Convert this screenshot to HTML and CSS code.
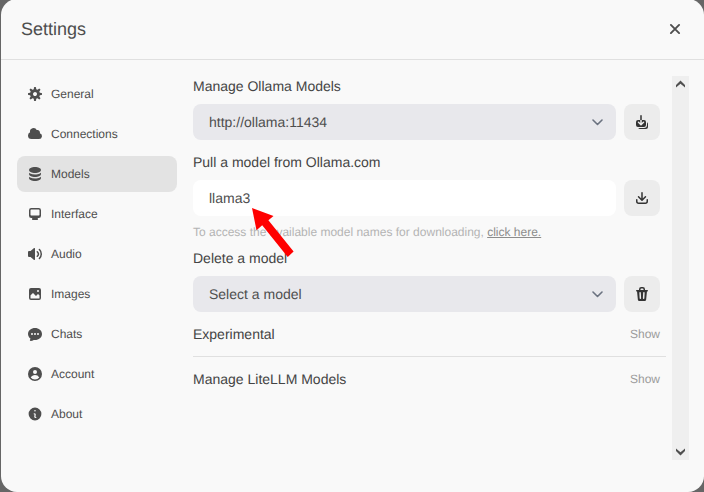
FILE: index.html
```html
<!DOCTYPE html>
<html lang="en">
<head>
<meta charset="utf-8">
<meta name="viewport" content="width=device-width, initial-scale=1">
<title>Settings</title>
<link rel="stylesheet" href="styles.css">
</head>
<body>
<div class="modal" role="dialog" aria-labelledby="title">
  <header class="header">
    <h1 class="title" id="title">Settings</h1>
    <button class="close" type="button" aria-label="Close">
      <svg viewBox="0 0 20 20" width="20" height="20" fill="none" stroke="currentColor" stroke-width="1.9" stroke-linecap="round"><path d="M5.900 5.900 14.100 14.100M14.100 5.900 5.900 14.100"/></svg>
    </button>
  </header>
  <div class="content">
    <nav class="tabs">
      <button class="tab" type="button">
        <svg class="icon" viewBox="0 0 16 16"><path fill-rule="evenodd" d="M6.955 1.45A.5.5 0 0 1 7.452 1h1.096a.5.5 0 0 1 .497.45l.17 1.699c.484.12.94.312 1.356.562l1.321-1.081a.5.5 0 0 1 .67.033l.774.775a.5.5 0 0 1 .034.67l-1.08 1.32c.25.417.44.873.561 1.357l1.699.17a.5.5 0 0 1 .45.497v1.096a.5.5 0 0 1-.45.497l-1.699.17c-.12.484-.312.94-.562 1.356l1.082 1.322a.5.5 0 0 1-.034.67l-.774.774a.5.5 0 0 1-.67.033l-1.322-1.08c-.416.25-.872.44-1.356.561l-.17 1.699a.5.5 0 0 1-.497.45H7.452a.5.5 0 0 1-.497-.45l-.17-1.699a4.973 4.973 0 0 1-1.356-.562L4.108 13.37a.5.5 0 0 1-.67-.033l-.774-.775a.5.5 0 0 1-.034-.67l1.08-1.32a4.971 4.971 0 0 1-.561-1.357l-1.699-.17A.5.5 0 0 1 1 8.548V7.452a.5.5 0 0 1 .45-.497l1.699-.17c.12-.484.312-.94.562-1.356L2.629 4.107a.5.5 0 0 1 .034-.67l.774-.774a.5.5 0 0 1 .67-.033L5.43 3.71a4.97 4.97 0 0 1 1.356-.561l.17-1.699ZM6 8c0 .538.212 1.026.558 1.385l.057.057a2 2 0 0 0 2.828-2.828l-.058-.056A2 2 0 0 0 6 8Z"/></svg>
        General
      </button>
      <button class="tab" type="button">
        <svg class="icon" viewBox="0 0 16 16"><path d="M1 9.5A3.5 3.5 0 0 0 4.5 13H12a3 3 0 0 0 .917-5.857 2.503 2.503 0 0 0-3.198-3.019 3.5 3.5 0 0 0-6.628 2.171A3.5 3.5 0 0 0 1 9.5Z"/></svg>
        Connections
      </button>
      <button class="tab tab-active" type="button">
        <svg class="icon" viewBox="0 0 16 16"><path d="M8 7c3.314 0 6-1.343 6-3s-2.686-3-6-3-6 1.343-6 3 2.686 3 6 3Z"/><path d="M8 8.5c1.84 0 3.579-.37 4.914-1.037A6.33 6.33 0 0 0 14 6.78V8c0 1.657-2.686 3-6 3S2 9.657 2 8V6.78c.346.273.72.5 1.087.683C4.42 8.131 6.16 8.5 8 8.5Z"/><path d="M8 12.5c1.84 0 3.579-.37 4.914-1.037.366-.183.74-.41 1.086-.684V12c0 1.657-2.686 3-6 3s-6-1.343-6-3v-1.22c.346.273.72.5 1.087.683C4.42 12.131 6.16 12.5 8 12.5Z"/></svg>
        Models
      </button>
      <button class="tab" type="button">
        <svg class="icon" viewBox="0 0 16 16"><path fill-rule="evenodd" d="M2 4.25A2.25 2.25 0 0 1 4.25 2h7.5A2.25 2.25 0 0 1 14 4.25v5.5A2.25 2.25 0 0 1 11.75 12h-1.312c.1.128.21.248.328.36a.75.75 0 0 1 .234.545v.345a.75.75 0 0 1-.75.75h-4.5a.75.75 0 0 1-.75-.75v-.345a.75.75 0 0 1 .234-.545c.118-.111.228-.232.328-.36H4.25A2.25 2.25 0 0 1 2 9.75v-5.5Zm2.25-.75a.75.75 0 0 0-.75.75v4.5c0 .414.336.75.75.75h7.5a.75.75 0 0 0 .75-.75v-4.5a.75.75 0 0 0-.75-.75h-7.5Z"/></svg>
        Interface
      </button>
      <button class="tab" type="button">
        <svg class="icon" viewBox="0 0 16 16"><path d="M7.557 2.066A.75.75 0 0 1 8 2.75v10.5a.75.75 0 0 1-1.248.56L3.59 11H2a1 1 0 0 1-1-1V6a1 1 0 0 1 1-1h1.59l3.162-2.81a.75.75 0 0 1 .805-.124ZM12.95 3.05a.75.75 0 1 0-1.06 1.06 5.5 5.5 0 0 1 0 7.78.75.75 0 1 0 1.06 1.06 7 7 0 0 0 0-9.9Z"/><path d="M10.828 5.172a.75.75 0 1 0-1.06 1.06 2.5 2.5 0 0 1 0 3.536.75.75 0 1 0 1.06 1.06 4 4 0 0 0 0-5.656Z"/></svg>
        Audio
      </button>
      <button class="tab" type="button">
        <svg class="icon" viewBox="0 0 16 16"><path fill-rule="evenodd" d="M2 4a2 2 0 0 1 2-2h8a2 2 0 0 1 2 2v8a2 2 0 0 1-2 2H4a2 2 0 0 1-2-2V4Zm10.5 5.707a.5.5 0 0 0-.146-.353l-1-1a.5.5 0 0 0-.708 0L9.354 9.646a.5.5 0 0 1-.708 0L6.354 7.354a.5.5 0 0 0-.708 0l-2 2a.5.5 0 0 0-.146.353V12a.5.5 0 0 0 .5.5h8a.5.5 0 0 0 .5-.5V9.707ZM12 5a1 1 0 1 1-2 0 1 1 0 0 1 2 0Z"/></svg>
        Images
      </button>
      <button class="tab" type="button">
        <svg class="icon" viewBox="0 0 16 16"><path fill-rule="evenodd" d="M8 2C4.262 2 1 4.57 1 8c0 1.86.98 3.486 2.455 4.566a3.472 3.472 0 0 1-.469 1.26.75.75 0 0 0 .713 1.14 6.961 6.961 0 0 0 3.06-1.06c.403.062.818.094 1.241.094 3.738 0 7-2.57 7-6s-3.262-6-7-6ZM5 9a1 1 0 1 0 0-2 1 1 0 0 0 0 2Zm7-1a1 1 0 1 1-2 0 1 1 0 0 1 2 0ZM8 9a1 1 0 1 0 0-2 1 1 0 0 0 0 2Z"/></svg>
        Chats
      </button>
      <button class="tab" type="button">
        <svg class="icon" viewBox="0 0 16 16"><path fill-rule="evenodd" d="M15 8A7 7 0 1 1 1 8a7 7 0 0 1 14 0Zm-5-2a2 2 0 1 1-4 0 2 2 0 0 1 4 0ZM8 9c-1.825 0-3.422.977-4.295 2.437A5.49 5.49 0 0 0 8 13.5a5.49 5.49 0 0 0 4.294-2.063A4.997 4.997 0 0 0 8 9Z"/></svg>
        Account
      </button>
      <button class="tab" type="button">
        <svg class="icon" viewBox="0 0 20 20"><path fill-rule="evenodd" d="M18 10a8 8 0 1 1-16 0 8 8 0 0 1 16 0Zm-7-4a1 1 0 1 1-2 0 1 1 0 0 1 2 0ZM9 9a.75.75 0 0 0 0 1.5h.253a.25.25 0 0 1 .244.304l-.459 2.066A1.75 1.75 0 0 0 10.747 15H11a.75.75 0 0 0 0-1.5h-.253a.25.25 0 0 1-.244-.304l.459-2.066A1.75 1.75 0 0 0 9.253 9H9Z"/></svg>
        About
      </button>
    </nav>
    <main class="panel">
      <section class="group">
        <label class="label" for="server">Manage Ollama Models</label>
        <div class="row">
          <div class="field">
            <select class="control select" id="server"><option>http://ollama:11434</option></select>
            <svg class="chevron" viewBox="0 0 12 12"><path d="M1 4 5.500 8.500 10 4"/></svg>
          </div>
          <button class="action" type="button" aria-label="Update all models">
            <svg class="icon" viewBox="0 0 16 16"><path d="M7 1a.75.75 0 0 1 .75.75V6h-1.5V1.75A.75.75 0 0 1 7 1ZM6.250 6v2.940L5.030 7.720a.75.75 0 0 0-1.060 1.060l2.500 2.500a.75.75 0 0 0 1.060 0l2.500-2.500a.75.75 0 1 0-1.060-1.060L7.750 8.940V6H10a2 2 0 0 1 2 2v3a2 2 0 0 1-2 2H4a2 2 0 0 1-2-2V8a2 2 0 0 1 2-2h2.250Z"/><path d="M4.268 14A2 2 0 0 0 6 15h6a2 2 0 0 0 2-2v-3a2 2 0 0 0-1-1.732V11a3 3 0 0 1-3 3H4.268Z"/></svg>
          </button>
        </div>
      </section>
      <section class="group">
        <label class="label" for="pull">Pull a model from Ollama.com</label>
        <div class="row">
          <div class="field">
            <input class="control input" id="pull" type="text" value="llama3">
            <svg class="pointer" viewBox="0 0 44 50"><path d="M1 0 22.500 8 17.400 12.200 42.600 43.600 36.700 49 11.200 17.200 5.500 22.300Z"/></svg>
          </div>
          <button class="action" type="button" aria-label="Pull model">
            <svg class="icon" viewBox="0 0 16 16"><path d="M8.750 2.750a.75.75 0 0 0-1.500 0v5.690L5.030 6.220a.75.75 0 0 0-1.060 1.060l3.500 3.500a.75.75 0 0 0 1.060 0l3.500-3.500a.75.75 0 0 0-1.060-1.060L8.750 8.440V2.750Z"/><path d="M3.500 9.750a.75.75 0 0 0-1.500 0v1.500A2.750 2.750 0 0 0 4.750 14h6.500A2.750 2.750 0 0 0 14 11.250v-1.500a.75.75 0 0 0-1.500 0v1.500c0 .69-.56 1.250-1.250 1.250h-6.500c-.69 0-1.250-.56-1.250-1.250v-1.500Z"/></svg>
          </button>
        </div>
        <p class="hint">To access the available model names for downloading, <a class="link" href="#library">click here.</a></p>
      </section>
      <section class="group">
        <label class="label" for="delete">Delete a model</label>
        <div class="row">
          <div class="field">
            <select class="control select" id="delete"><option>Select a model</option></select>
            <svg class="chevron" viewBox="0 0 12 12"><path d="M1 4 5.500 8.500 10 4"/></svg>
          </div>
          <button class="action" type="button" aria-label="Delete model">
            <svg class="icon" viewBox="0 0 16 16"><path fill-rule="evenodd" d="M5 3.250V4H2.750a.75.75 0 0 0 0 1.500h.3l.815 8.150A1.500 1.500 0 0 0 5.357 15h5.285a1.500 1.500 0 0 0 1.493-1.350l.815-8.150h.3a.75.75 0 0 0 0-1.500H11v-.75A2.250 2.250 0 0 0 8.750 1h-1.500A2.250 2.250 0 0 0 5 3.250Zm2.250-.75a.75.75 0 0 0-.75.75V4h3v-.75a.75.75 0 0 0-.75-.75h-1.500ZM6.050 6a.75.75 0 0 1 .787.713l.275 5.500a.75.75 0 0 1-1.498.075l-.275-5.500A.75.75 0 0 1 6.050 6Zm3.900 0a.75.75 0 0 1 .712.787l-.275 5.500a.75.75 0 0 1-1.498-.075l.275-5.500a.75.75 0 0 1 .786-.711Z"/></svg>
          </button>
        </div>
      </section>
      <div class="expander">
        <h2 class="label">Experimental</h2>
        <button class="show" type="button">Show</button>
      </div>
      <hr class="divider">
      <div class="expander">
        <h2 class="label">Manage LiteLLM Models</h2>
        <button class="show" type="button">Show</button>
      </div>
    </main>
    <div class="scrollbar" aria-hidden="true">
      <svg class="arrow" viewBox="0 0 17 17"><path d="M8.500 4.500 13 9V11.500L8.500 7.700 4 11.500V9Z"/></svg>
      <svg class="arrow" viewBox="0 0 17 17"><path d="M8.500 12.500 13 8V5.500L8.500 9.300 4 5.500V8Z"/></svg>
    </div>
  </div>
</div>
</body>
</html>
```
FILE: styles.css
```css
* {
  box-sizing: border-box;
}

body {
  margin: 0;
  padding-left: 1px;
  min-height: 100vh;
  display: flex;
  background: #666;
  color: #4e4e4e;
  font: 14px/20px "Liberation Sans", Arial, sans-serif;
  text-rendering: geometricPrecision;
}

button,
input,
select {
  margin: 0;
  padding: 0;
  border: 0;
  background: none;
  color: inherit;
  font: inherit;
  text-rendering: inherit;
}

svg {
  display: block;
}

.modal {
  flex: 1;
  display: flex;
  flex-direction: column;
  margin-top: -1px;
  border-radius: 16px;
  background: #f9f9f9;
}

.header {
  display: flex;
  align-items: center;
  justify-content: space-between;
  padding: 16px 19px 16px 20px;
  border-bottom: 1px solid #e0e0e0;
}

.title {
  margin: 0;
  font-size: 18px;
  line-height: 28px;
  font-weight: 400;
}

.content {
  flex: 1;
  display: flex;
  padding: 16px 15px 32px 16px;
}

.tabs {
  flex: none;
  display: flex;
  flex-direction: column;
  gap: 4px;
  width: 160px;
  margin-right: 16px;
}

.tab {
  display: flex;
  align-items: center;
  gap: 8px;
  height: 36px;
  padding: 0 10px;
  border-radius: 8px;
  font-size: 12px;
  text-align: left;
}

.tab-active {
  background: #e3e3e3;
}

.icon {
  width: 16px;
  height: 16px;
  fill: currentColor;
}

.panel {
  flex: 1;
  min-width: 0;
  padding-right: 6px;
}

.group {
  display: flex;
  flex-direction: column;
  gap: 8px;
  margin-bottom: 12px;
  padding-right: 6px;
}

.group:has(.hint) {
  margin-bottom: 8px;
}

.label {
  margin: 0;
  color: #444;
  font-size: 14px;
  font-weight: 400;
  line-height: 20px;
}

.row {
  display: flex;
  gap: 8px;
}

.field {
  position: relative;
  flex: 1;
}

.control {
  display: block;
  width: 100%;
  height: 36px;
  padding: 0 16px;
  border-radius: 8px;
}

.select {
  appearance: none;
  background: #e8e8ec;
}

.input {
  background: #fff;
}

.chevron {
  position: absolute;
  top: 12px;
  right: 12px;
  width: 12px;
  height: 12px;
  fill: none;
  stroke: #6b7280;
  stroke-width: 1.6;
  stroke-linecap: round;
  stroke-linejoin: round;
  pointer-events: none;
}

.pointer {
  position: absolute;
  z-index: 1;
  top: 28px;
  left: 58px;
  width: 44px;
  height: 50px;
  fill: #f00;
  pointer-events: none;
}

.action {
  display: grid;
  place-items: center;
  width: 36px;
  height: 36px;
  border-radius: 8px;
  background: #ececec;
  color: #333;
}

.hint {
  margin: 0;
  color: #b4b4b4;
  font-size: 12px;
  line-height: 16px;
}

.link {
  color: #8c8c8c;
}

.expander {
  display: flex;
  align-items: center;
  justify-content: space-between;
  padding-right: 6px;
}

.show {
  color: #9b9b9b;
  font-size: 12px;
}

.divider {
  margin: 12px 0;
  border: 0;
  border-top: 1px solid #e0e0e0;
}

.scrollbar {
  flex: none;
  display: flex;
  flex-direction: column;
  justify-content: space-between;
  width: 17px;
  background: #efefef;
}

.arrow {
  width: 17px;
  height: 17px;
  fill: #505050;
}
```
